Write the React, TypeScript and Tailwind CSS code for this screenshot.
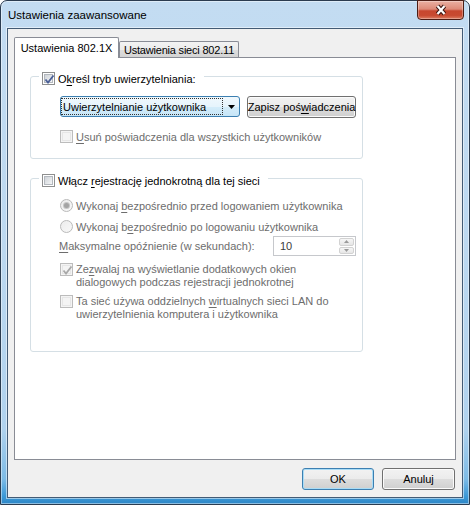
import type { ReactNode } from "react";

function U({ children }: { children: ReactNode }) {
  return <span className="underline decoration-1 underline-offset-[2px]">{children}</span>;
}

function CheckBox({ checked, disabled }: { checked?: boolean; disabled?: boolean }) {
  return (
    <span
      className={
        disabled
          ? "relative flex size-[13px] shrink-0 items-center justify-center border border-[#bcbcbc] bg-[#f4f4f4]"
          : "relative flex size-[13px] shrink-0 items-center justify-center border border-[#8e8f8f] bg-white"
      }
    >
      <span
        className={
          disabled
            ? "size-[9px] border border-[#e6e6e6] bg-[#f4f4f4]"
            : "size-[9px] border border-[#b3b8be] bg-[linear-gradient(135deg,#cfd3d8,#f4f5f6)]"
        }
      />
      {checked ? (
        <svg className="absolute left-[1px] top-[1px]" width="11" height="11" viewBox="0 0 11 11">
          <path
            d="M1.5 5.5 L4 8.5 L9.5 1.5"
            fill="none"
            stroke={disabled ? "#a8a8a8" : "#4a5f97"}
            strokeWidth="1.8"
          />
        </svg>
      ) : null}
    </span>
  );
}

function Radio({ checked }: { checked?: boolean }) {
  return (
    <span className="flex size-[13px] shrink-0 items-center justify-center rounded-full border border-[#bababa] bg-[linear-gradient(135deg,#ececec,#f8f8f8)]">
      {checked ? <span className="size-[5px] rounded-full bg-[#a4a4a4] ring-1 ring-[#c6c6c6]" /> : null}
    </span>
  );
}

function Button({ children, width, isDefault }: { children: ReactNode; width: string; isDefault?: boolean }) {
  return (
    <div
      className={
        isDefault
          ? `${width} flex h-[22px] items-center justify-center rounded-[3px] border border-[#3c7fb1] bg-[linear-gradient(#f2f2f2_0%,#ebebeb_50%,#dddddd_50%,#cfcfcf_100%)] shadow-[inset_0_0_0_1px_#a9dcf6]`
          : `${width} flex h-[22px] items-center justify-center rounded-[3px] border border-[#707070] bg-[linear-gradient(#f2f2f2_0%,#ebebeb_50%,#dddddd_50%,#cfcfcf_100%)] shadow-[inset_0_0_0_1px_#fbfbfb]`
      }
    >
      <span className="whitespace-nowrap">{children}</span>
    </div>
  );
}

function GroupBox({ legend, className, children }: { legend: ReactNode; className: string; children: ReactNode }) {
  return (
    <div className={`relative ml-[15px] w-[333px] rounded-[3px] border border-[#d5dfe5] pl-[28px] ${className}`}>
      <div className="absolute -top-[6px] left-[8px] flex h-[15px] items-center gap-[3px] whitespace-nowrap bg-white pl-[3px] pr-[8px]">
        {legend}
      </div>
      {children}
    </div>
  );
}

export default function App() {
  return (
    <div className="h-[505px] w-[470px] font-['Liberation_Sans',Arial,sans-serif] text-[11px] leading-[14px] text-black">
      <div className="flex h-full w-full flex-col rounded-t-[7px] border border-[#2b3c50] bg-[linear-gradient(180deg,#c3dcf2_0%,#bcd8f0_50%,#b0d2ee_85%,#7dbbe6_95%,#3b98d6_98.5%,#2e86c6_100%)] shadow-[inset_0_0_0_1px_rgba(255,255,255,0.45)]">
        {/* title bar */}
        <div className="flex h-[27px] items-start justify-between">
          <span className="self-center pl-[7px] text-[11.5px]">Ustawienia zaawansowane</span>
          <div className="-mt-px mr-[5px] flex h-[20px] w-[47px] items-center justify-center rounded-b-[4px] border border-[#4c1d15] bg-[linear-gradient(#eab0a2_0%,#dd8a78_45%,#c7472f_55%,#c84a31_80%,#dc7d62_100%)] shadow-[inset_0_0_0_1px_rgba(255,255,255,0.3)]">
            <svg width="14" height="12" viewBox="0 0 14 12">
              <path d="M3.5 2 L10.5 10 M10.5 2 L3.5 10" fill="none" stroke="#3a1510" strokeWidth="4.2" />
              <path d="M3.5 2 L10.5 10 M10.5 2 L3.5 10" fill="none" stroke="#ffffff" strokeWidth="2.2" />
            </svg>
          </div>
        </div>

        {/* client area */}
        <div className="mx-[6px] mb-[6px] flex flex-1 flex-col border border-[#435b75] bg-[#f0f0f0] pt-[8px] shadow-[0_0_0_1px_rgba(255,255,255,0.5)]">
          {/* tabs */}
          <div className="ml-[6px] flex h-[20px] items-end">
            <div className="relative z-10 -mb-px flex h-[21px] w-[105px] justify-center rounded-t-[2px] border-x border-t border-[#898c95] bg-white pt-[3px]">
              Ustawienia 802.1X
            </div>
            <div className="flex h-[16px] w-[120px] items-center justify-center whitespace-nowrap rounded-t-[2px] border-x border-t border-[#898c95] bg-[linear-gradient(#f3f3f3_0%,#ebebeb_50%,#dedede_50%,#d4d4d4_100%)] tracking-[-0.2px]">
              Ustawienia sieci 802.11
            </div>
          </div>

          {/* tab panel */}
          <div className="ml-[6px] h-[403px] w-[442px] border border-[#898c95] bg-white">
            <GroupBox
              className="mt-[18px] pb-[15px] pt-[19px]"
              legend={
                <>
                  <CheckBox checked />
                  <span>
                    O<U>k</U>reśl tryb uwierzytelniania:
                  </span>
                </>
              }
            >
              <div className="flex gap-[7px] pl-px">
                <div className="flex h-[21px] w-[180px] items-center justify-between rounded-[3px] border border-[#3c7fb1] bg-[linear-gradient(#f0f8fd_0%,#e6f4fc_50%,#d5edfa_50%,#c6e5f7_100%)] pl-[1px] pr-[4px]">
                  <span className="flex h-[15px] w-[160px] items-center px-[1px] outline-1 outline-dotted outline-[#333]">
                    Uwierzytelnianie użytkownika
                  </span>
                  <svg width="7" height="4" viewBox="0 0 7 4">
                    <path d="M0 0 H7 L3.5 4 Z" fill="#000" />
                  </svg>
                </div>
                <Button width="w-[109px]">
                  Zapisz poś<U>w</U>iadczenia
                </Button>
              </div>
              <div className="mt-[12px] flex h-[13px] items-center gap-[3px] pl-px text-[#6d6d6d]">
                <CheckBox disabled />
                <span>
                  <U>U</U>suń poświadczenia dla wszystkich użytkowników
                </span>
              </div>
            </GroupBox>

            <GroupBox
              className="mt-[19px] pb-[30px] pt-[20px] text-[#6d6d6d]"
              legend={
                <>
                  <CheckBox />
                  <span className="text-black">
                    Włącz <U>r</U>ejestrację jednokrotną dla tej sieci
                  </span>
                </>
              }
            >
              <div className="flex h-[13px] items-center gap-[3px] pl-px">
                <Radio checked />
                <span>
                  Wykonaj <U>b</U>ezpośrednio przed logowaniem użytkownika
                </span>
              </div>
              <div className="mt-[8px] flex h-[13px] items-center gap-[3px] pl-px">
                <Radio />
                <span>
                  Wykonaj b<U>e</U>zpośrednio po logowaniu użytkownika
                </span>
              </div>
              <div className="mt-[3px] flex h-[20px] items-center">
                <span className="w-[214px]">
                  <U>M</U>aksymalne opóźnienie (w sekundach):
                </span>
                <div className="flex h-[20px] w-[83px] border border-[#c6c8cc] bg-white">
                  <span className="flex-1 pl-[6px] leading-[18px] text-[#3c3c3c]">10</span>
                  <div className="flex w-[17px] flex-col gap-px p-px">
                    <div className="flex flex-1 items-center justify-center rounded-[2px] border border-[#d2d2d2] bg-[linear-gradient(#f6f6f6,#e6e6e6)]">
                      <svg width="5" height="3" viewBox="0 0 5 3">
                        <path d="M0 3 H5 L2.5 0 Z" fill="#9a9a9a" />
                      </svg>
                    </div>
                    <div className="flex flex-1 items-center justify-center rounded-[2px] border border-[#d2d2d2] bg-[linear-gradient(#f6f6f6,#e6e6e6)]">
                      <svg width="5" height="3" viewBox="0 0 5 3">
                        <path d="M0 0 H5 L2.5 3 Z" fill="#9a9a9a" />
                      </svg>
                    </div>
                  </div>
                </div>
              </div>
              <div className="mt-[7px] flex items-start gap-[3px] pl-px leading-[13px]">
                <CheckBox checked disabled />
                <span>
                  Ze<U>z</U>walaj na wyświetlanie dodatkowych okien
                  <br />
                  dialogowych podczas rejestracji jednokrotnej
                </span>
              </div>
              <div className="mt-[6px] flex items-start gap-[3px] pl-px leading-[13px]">
                <CheckBox disabled />
                <span>
                  Ta sieć używa oddzielnych <U>w</U>irtualnych sieci LAN do
                  <br />
                  uwierzytelnienia komputera i użytkownika
                </span>
              </div>
            </GroupBox>
          </div>

          {/* dialog buttons */}
          <div className="mr-[7px] mt-[8px] flex justify-end gap-[8px]">
            <Button width="w-[72px]" isDefault>
              OK
            </Button>
            <Button width="w-[73px]">Anuluj</Button>
          </div>
        </div>
      </div>
    </div>
  );
}
